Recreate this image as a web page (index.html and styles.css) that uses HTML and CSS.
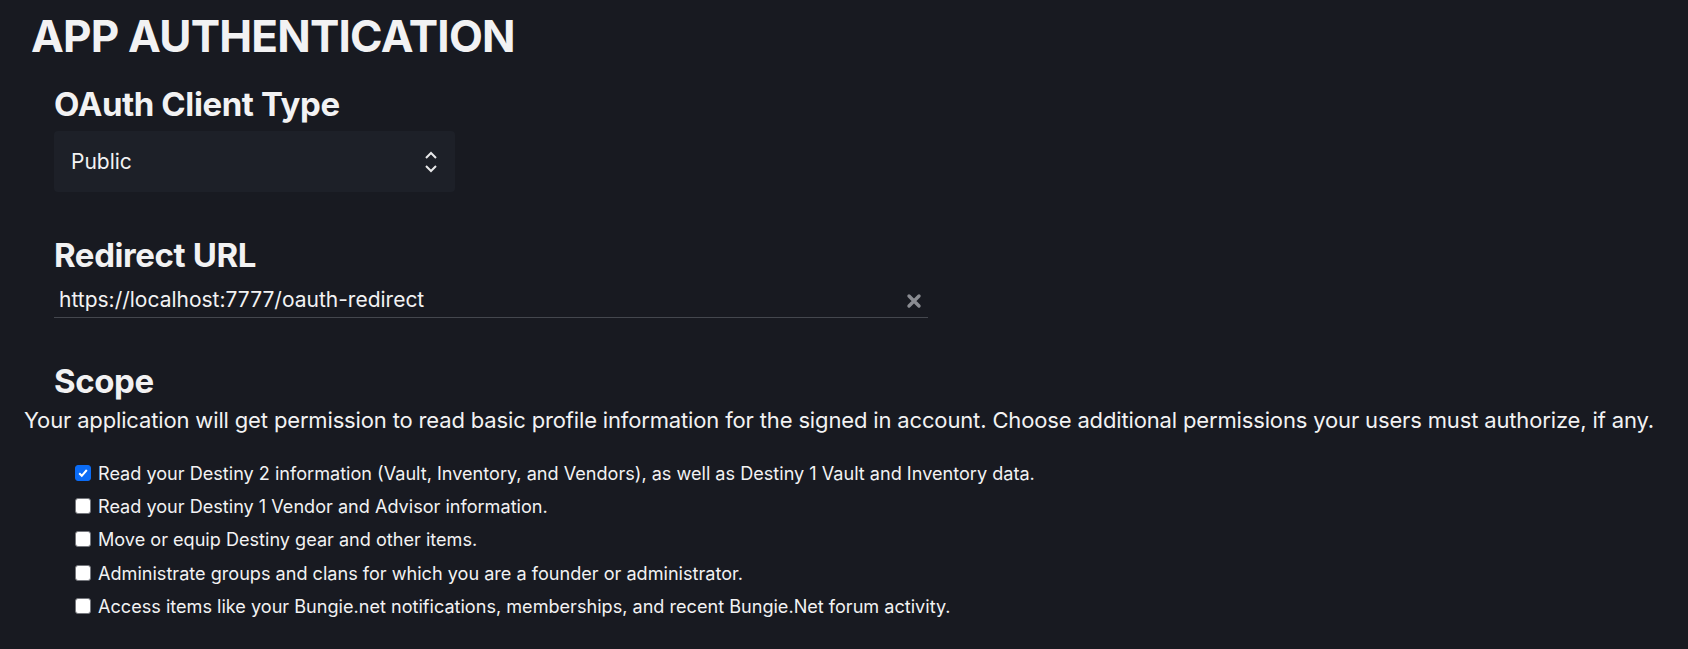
FILE: index.html
```html
<!DOCTYPE html>
<html>
<head>
<meta charset="utf-8">
<link rel="stylesheet" href="styles.css">
</head>
<body>
<div class="page">
  <h1 class="title">APP AUTHENTICATION</h1>
  <section class="group">
    <h2 class="label">OAuth Client Type</h2>
    <div class="select">
      <span>Public</span>
      <svg class="chev" width="14" height="24" viewBox="0 0 14 24"><path d="M2 8 L7 3 L12 8" fill="none" stroke="#e8e8ea" stroke-width="2"/><path d="M2 16 L7 21 L12 16" fill="none" stroke="#e8e8ea" stroke-width="2"/></svg>
    </div>
  </section>
  <section class="group">
    <h2 class="label">Redirect URL</h2>
    <div class="input">
      <span>https://localhost:7777/oauth-redirect</span>
      <svg class="clear" width="16" height="16" viewBox="0 0 16 16"><path d="M3 3 L13 13 M13 3 L3 13" stroke="#8a8c92" stroke-width="3.4" stroke-linecap="round"/></svg>
    </div>
  </section>
  <section class="group scope">
    <h2 class="label">Scope</h2>
    <p class="desc">Your application will get permission to read basic profile information for the signed in account. Choose additional permissions your users must authorize, if any.</p>
    <ul class="checks">
      <li><span class="box on"><svg width="12" height="12" viewBox="0 0 12 12"><path d="M2.2 6.2 L4.8 8.8 L9.8 3" fill="none" stroke="#fff" stroke-width="2"/></svg></span>Read your Destiny 2 information (Vault, Inventory, and Vendors), as well as Destiny 1 Vault and Inventory data.</li>
      <li><span class="box"></span>Read your Destiny 1 Vendor and Advisor information.</li>
      <li><span class="box"></span>Move or equip Destiny gear and other items.</li>
      <li><span class="box"></span>Administrate groups and clans for which you are a founder or administrator.</li>
      <li><span class="box"></span>Access items like your Bungie.net notifications, memberships, and recent Bungie.Net forum activity.</li>
    </ul>
  </section>
</div>
</body>
</html>
```
FILE: styles.css
```css
html, body {
  margin: 0;
  background: #181a21;
}
body {
  font-family: Inter, "Noto Sans", sans-serif;
  color: #f2f2f3;
}
.page {
  padding: 8px 0 0 31px;
}
.title {
  margin: 0;
  font-size: 44px;
  font-weight: 700;
  line-height: 56px;
  letter-spacing: -0.8px;
}
.group {
  margin-left: 23px;
}
.label {
  margin: 20px 0 0 0;
  font-size: 33px;
  font-weight: 700;
  line-height: 40px;
  letter-spacing: -0.4px;
}
.select {
  margin-top: 7px;
  width: 401px;
  height: 61px;
  box-sizing: border-box;
  background: #1d2028;
  border-radius: 4px;
  display: flex;
  align-items: center;
  justify-content: space-between;
  padding: 0 17px 0 17px;
  font-size: 21px;
}
.group + .group .label {
  margin-top: 43px;
}
.input {
  margin-top: 5px;
  width: 874px;
  height: 38px;
  box-sizing: border-box;
  border-bottom: 1px solid #44474e;
  display: flex;
  align-items: center;
  justify-content: space-between;
  padding: 1px 6px 0 5px;
  font-size: 21px;
}
.clear {
  margin-top: 4px;
}
.scope .label {
  margin-top: 44px;
}
.desc {
  margin: 4px 0 0 -30px;
  font-size: 22px;
  line-height: 30px;
  letter-spacing: -0.15px;
}
.checks {
  list-style: none;
  margin: 21px 0 0 22px;
  padding: 0;
}
.checks li {
  display: flex;
  align-items: center;
  height: 33.4px;
  font-size: 18.1px;
}
.box {
  width: 16px;
  height: 16px;
  box-sizing: border-box;
  background: #fff;
  border: 1.5px solid #75777d;
  border-radius: 3px;
  margin-right: 7px;
  margin-left: -1px;
  display: flex;
  align-items: center;
  justify-content: center;
  flex: none;
}
.box.on {
  background: #0b6cf6;
  border-color: #0b6cf6;
}
```
